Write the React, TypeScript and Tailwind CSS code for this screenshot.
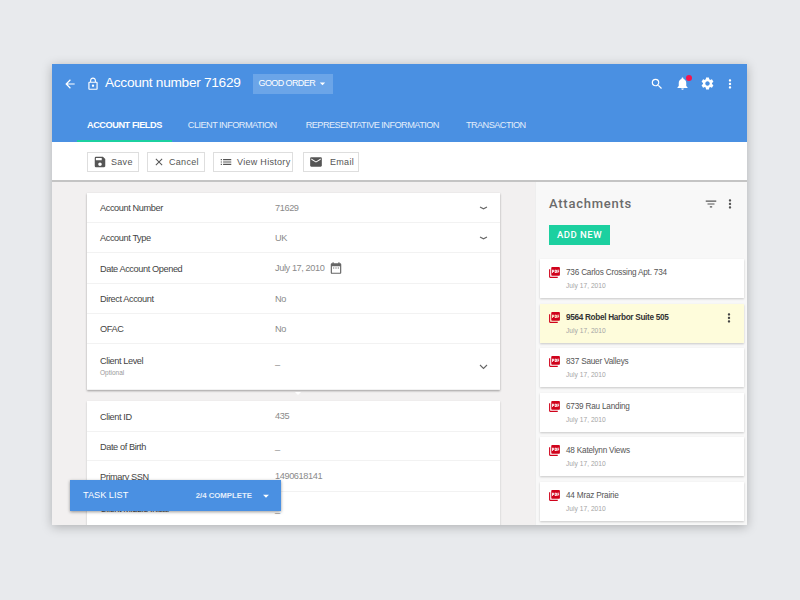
import React from "react";
import {
  MdArrowBack,
  MdArrowDropDown,
  MdDateRange,
  MdEmail,
  MdFilterList,
  MdList,
  MdLockOutline,
  MdClose,
  MdMoreVert,
  MdNotifications,
  MdPictureAsPdf,
  MdSave,
  MdSearch,
  MdSettings,
} from "react-icons/md";

const tabs = [
  { label: "ACCOUNT FIELDS", cls: "mr-[6px] border-[#1cd0a0] text-white font-bold tracking-[-0.45px]" },
  { label: "CLIENT INFORMATION", cls: "mr-[9px] border-transparent text-[#e4eefb] tracking-[-0.55px]" },
  { label: "REPRESENTATIVE INFORMATION", cls: "mr-[7px] border-transparent text-[#e4eefb] tracking-[-0.55px]" },
  { label: "TRANSACTION", cls: "border-transparent text-[#e4eefb] tracking-[-0.55px]" },
];

const attachments = [
  { name: "736 Carlos Crossing Apt. 734" },
  { name: "9564 Robel Harbor Suite 505", active: true },
  { name: "837 Sauer Valleys" },
  { name: "6739 Rau Landing" },
  { name: "48 Katelynn Views" },
  { name: "44 Mraz Prairie" },
];

const ToolButton = ({ icon, label, width }: { icon: React.ReactNode; label: string; width: string }) => (
  <button className={`${width} h-[20px] shrink-0 flex items-center gap-[4px] pl-[5px] bg-white border border-[#dedede] text-[9px] tracking-[0.3px] text-[#555] whitespace-nowrap`}>
    {icon}
    <span className="pt-[1px]">{label}</span>
  </button>
);

const Chevron = ({ tall }: { tall?: boolean }) => (
  <svg width="9" height="6" viewBox="0 0 9 6" fill="none" stroke="#666" strokeWidth="1.1">
    <path d={tall ? "M1 1L4.5 4.5L8 1" : "M1 2L4.5 3.8L8 2"} />
  </svg>
);

const Row = ({
  label,
  sub,
  value,
  height,
  chevron,
  tall,
  calendar,
}: {
  label: string;
  sub?: string;
  value: string;
  height: string;
  chevron?: boolean;
  tall?: boolean;
  calendar?: boolean;
}) => (
  <div className={`${height} flex items-center pl-[13px] pr-[12px] pt-[1px] border-b border-[#f2f2f2] last:border-b-0`}>
    <div className={`w-[175px] ${sub ? "-mt-[1px]" : ""}`}>
      <div className="text-[9.2px] leading-[12px] tracking-[-0.4px] text-[#444]">{label}</div>
      {sub && <div className="text-[6.5px] leading-[10px] mt-[1px] text-[#999]">{sub}</div>}
    </div>
    <div className={`flex-1 flex items-center gap-[5px] text-[9.2px] tracking-[-0.4px] text-[#8a8a8a] ${sub ? "-mt-[3px]" : "pt-[1px]"}`}>
      {value}
      {calendar && <MdDateRange className="text-[14px] text-[#666] -mt-[1px]" />}
    </div>
    {chevron && <Chevron tall={tall} />}
  </div>
);

export default function App() {
  return (
    <div className="w-[800px] h-[600px] bg-[#e8eaed] pl-[52px] pt-[64px] overflow-hidden font-['Liberation_Sans',Arial,sans-serif]">
      <div className="relative w-[695px] h-[461px] flex flex-col bg-[#f2f0f0] overflow-hidden shadow-[0_2px_10px_rgba(0,0,0,0.25)]">
        <header className="h-[78px] shrink-0 bg-[#4a90e2] text-white flex flex-col">
          <div className="h-[39px] flex items-center pl-[11px] pr-[10px]">
            <MdArrowBack className="text-[14px]" />
            <MdLockOutline className="text-[14px] ml-[9px]" />
            <span className="ml-[5px] text-[13.7px] tracking-[-0.3px]">Account number 71629</span>
            <span className="ml-[12px] w-[80px] h-[20px] flex items-center pl-[6px] bg-[#6ba5e8] text-[9px] tracking-[-0.6px] whitespace-nowrap">
              GOOD ORDER
              <MdArrowDropDown className="text-[13px] ml-[1px]" />
            </span>
            <div className="ml-auto flex items-center">
              <MdSearch className="text-[14px]" />
              <span className="relative ml-[11px]">
                <MdNotifications className="text-[15px]" />
                <span className="absolute -top-[1px] right-[-2px] w-[6px] h-[6px] rounded-full bg-[#f5144e]" />
              </span>
              <MdSettings className="text-[15px] ml-[10px]" />
              <MdMoreVert className="text-[14px] ml-[8px]" />
            </div>
          </div>
          <nav className="h-[39px] flex items-end pl-[25px]">
            {tabs.map((t) => (
              <div
                key={t.label}
                className={`h-[39px] flex items-center pt-[9px] px-[10px] text-[9.2px] border-b-2 whitespace-nowrap ${t.cls}`}
              >
                {t.label}
              </div>
            ))}
          </nav>
        </header>

        <div className="h-[40px] shrink-0 bg-white border-b-2 border-[#c4c4c4] flex items-center gap-[8px] pt-[2px] pl-[35px]">
          <ToolButton width="w-[52px]" icon={<MdSave className="text-[14px] text-[#555]" />} label="Save" />
          <ToolButton width="w-[58px]" icon={<MdClose className="text-[12px] text-[#555]" />} label="Cancel" />
          <ToolButton width="w-[80px]" icon={<MdList className="text-[14px] text-[#555]" />} label="View History" />
          <ToolButton width="w-[56px] ml-[2px]" icon={<MdEmail className="text-[14px] text-[#555] mr-[3px]" />} label="Email" />
        </div>

        <div className="flex-1 flex min-h-0">
          <main className="w-[483px] pl-[35px] pr-[35px] pt-[11px] overflow-hidden">
            <section className="relative bg-white shadow-[0_1px_2px_rgba(0,0,0,0.35)]">
              <Row label="Account Number" value="71629" height="h-[30px]" chevron />
              <Row label="Account Type" value="UK" height="h-[30px]" chevron />
              <Row label="Date Account Opened" value="July 17, 2010" height="h-[31px]" calendar />
              <Row label="Direct Account" value="No" height="h-[30px]" />
              <Row label="OFAC" value="No" height="h-[30px]" />
              <Row label="Client Level" sub="Optional" value="–" height="h-[46px]" chevron tall />
              <span className="absolute left-[208px] top-full mt-[2px] border-x-[3px] border-t-[3px] border-x-transparent border-t-white" />
            </section>
            <section className="mt-[11px] bg-white shadow-[0_1px_2px_rgba(0,0,0,0.2)]">
              <Row label="Client ID" value="435" height="h-[31px]" />
              <Row label="Date of Birth" value="_" height="h-[29px]" />
              <Row label="Primary SSN" value="1490618141" height="h-[31px]" />
              <Row label="Client Middle Initial" value="_" height="h-[34px]" />
              <div className="h-[30px]" />
            </section>
          </main>

          <aside className="flex-1 bg-[#f8f8f8] border-l border-[#eeeeee] flex flex-col">
            <div className="h-[43px] shrink-0 flex items-center pl-[13px] pr-[10px]">
              <span className="text-[13px] font-['Roboto',sans-serif] font-medium tracking-[0.75px] text-[#6b6b6b]">Attachments</span>
              <MdFilterList className="ml-auto text-[14px] text-[#555]" />
              <MdMoreVert className="ml-[5px] text-[14px] text-[#555]" />
            </div>
            <button className="ml-[13px] w-[61px] h-[20px] shrink-0 bg-[#1cd0a0] text-white text-[9.5px] font-['Roboto',sans-serif] font-medium tracking-[0.5px]">
              ADD NEW
            </button>
            <ul className="mt-[14px] pl-[4px] pr-[3px] flex flex-col gap-[5.5px]">
              {attachments.map((a) => (
                <li
                  key={a.name}
                  className={`h-[39px] flex items-start pl-[8px] pr-[8px] pt-[7px] shadow-[0_1px_2px_rgba(0,0,0,0.2)] ${
                    a.active ? "bg-[#fefcdb]" : "bg-white"
                  }`}
                >
                  <MdPictureAsPdf className="text-[13px] text-[#d0021b] shrink-0" />
                  <div className="ml-[5px] pt-[1px] flex-1">
                    <div className={`text-[8.2px] leading-[12px] ${a.active ? "text-[#333] font-bold tracking-[-0.3px]" : "text-[#555] tracking-[-0.2px]"}`}>
                      {a.name}
                    </div>
                    <div className="mt-[1px] text-[6.7px] leading-[11px] text-[#a5a5a5]">July 17, 2010</div>
                  </div>
                  {a.active && <MdMoreVert className="text-[14px] text-[#444]" />}
                </li>
              ))}
            </ul>
          </aside>
        </div>

        <div className="absolute left-[18px] top-[416px] w-[211px] h-[31px] bg-[#4a90e2] text-white flex items-center pl-[13px] pr-[8px] shadow-[0_1px_3px_rgba(0,0,0,0.4)]">
          <span className="text-[9.2px]">TASK LIST</span>
          <span className="ml-auto text-[7.8px] font-bold text-[#e4eefb]">2/4 COMPLETE</span>
          <MdArrowDropDown className="text-[14px] ml-[7px]" />
        </div>
      </div>
    </div>
  );
}
